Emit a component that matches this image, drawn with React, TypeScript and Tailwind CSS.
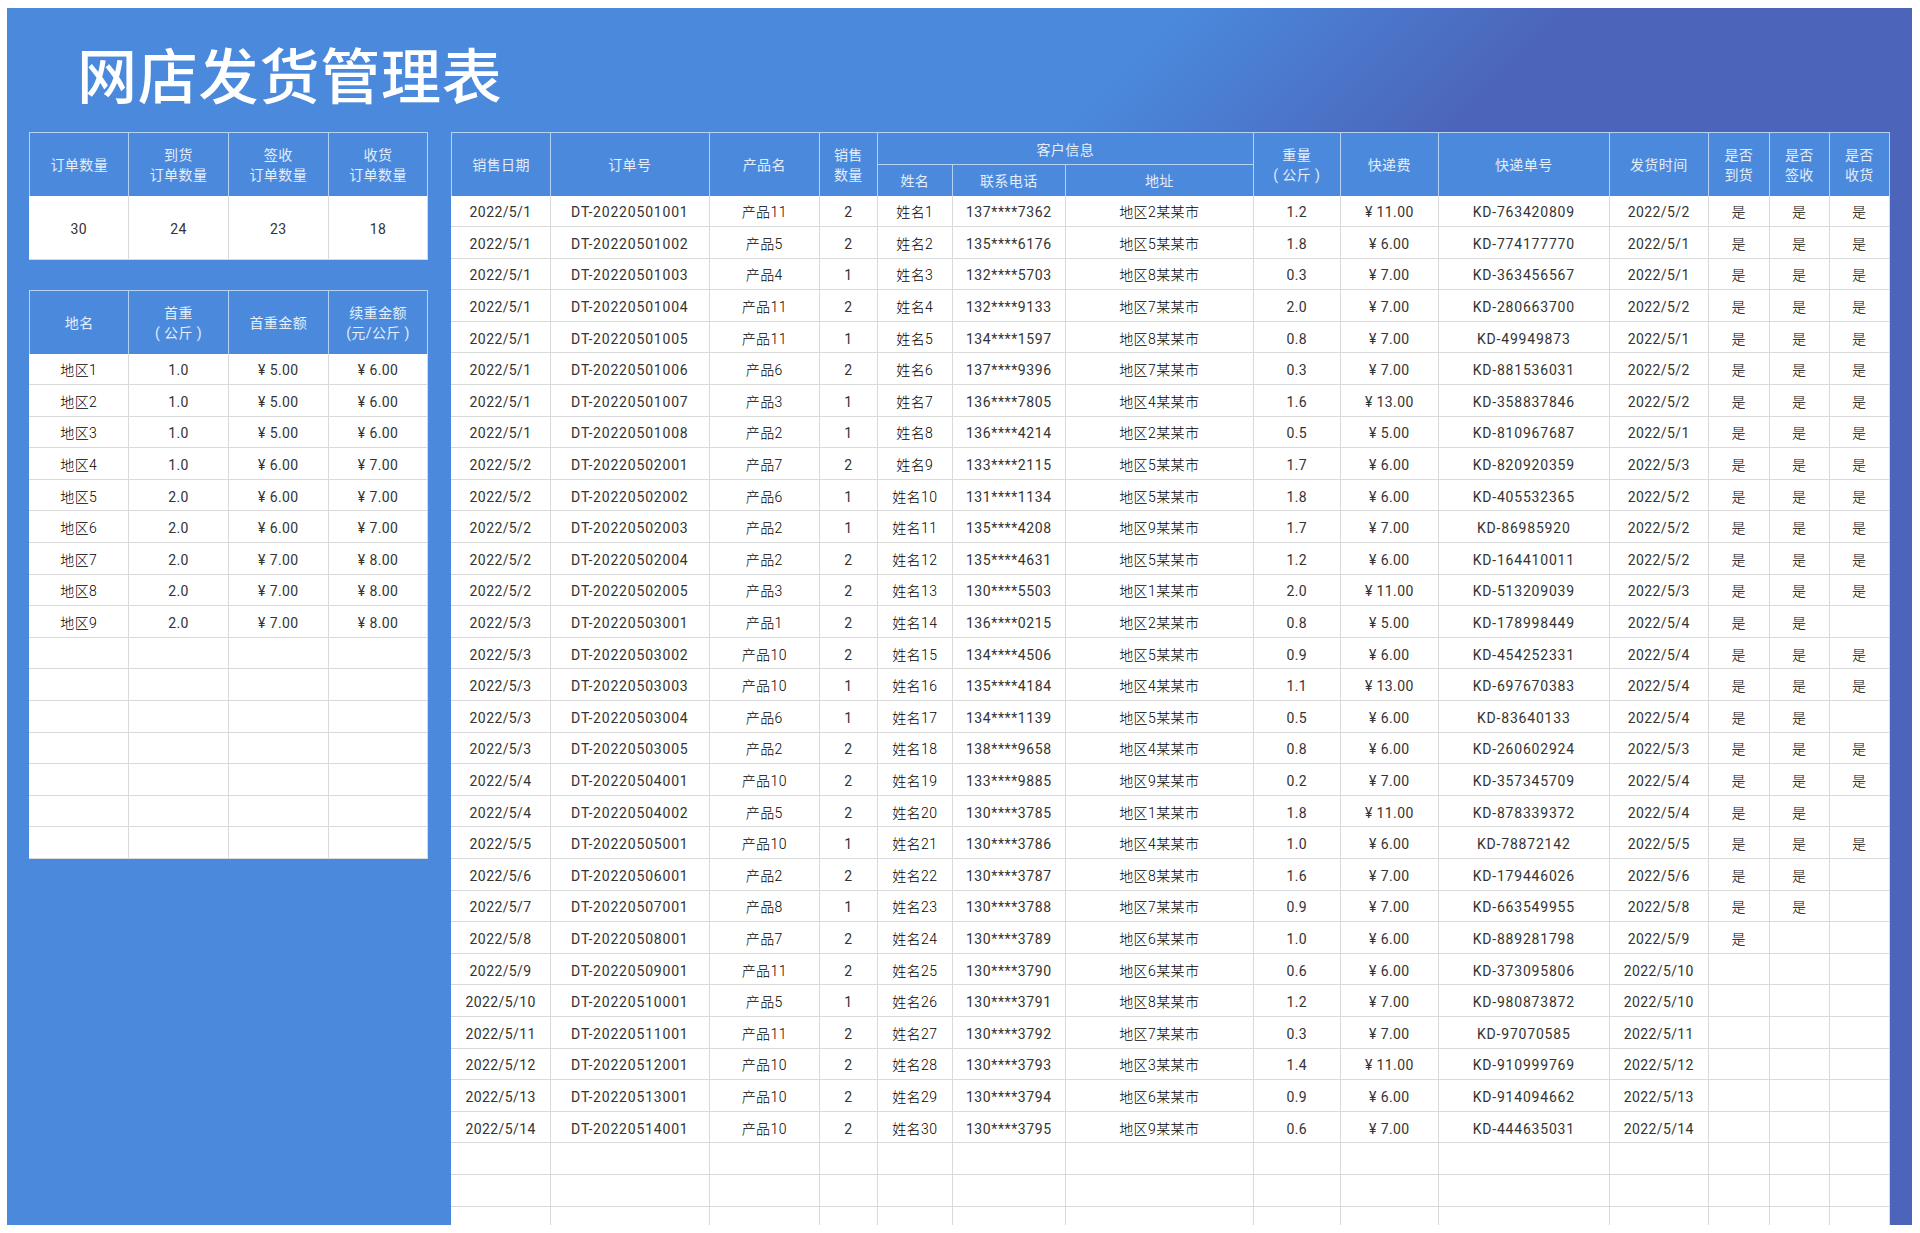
const raw = `2022/5/1|DT-20220501001|产品11|2|姓名1|137****7362|地区2某某市|1.2|11.00|KD-763420809|2022/5/2|是|是|是
2022/5/1|DT-20220501002|产品5|2|姓名2|135****6176|地区5某某市|1.8|6.00|KD-774177770|2022/5/1|是|是|是
2022/5/1|DT-20220501003|产品4|1|姓名3|132****5703|地区8某某市|0.3|7.00|KD-363456567|2022/5/1|是|是|是
2022/5/1|DT-20220501004|产品11|2|姓名4|132****9133|地区7某某市|2.0|7.00|KD-280663700|2022/5/2|是|是|是
2022/5/1|DT-20220501005|产品11|1|姓名5|134****1597|地区8某某市|0.8|7.00|KD-49949873|2022/5/1|是|是|是
2022/5/1|DT-20220501006|产品6|2|姓名6|137****9396|地区7某某市|0.3|7.00|KD-881536031|2022/5/2|是|是|是
2022/5/1|DT-20220501007|产品3|1|姓名7|136****7805|地区4某某市|1.6|13.00|KD-358837846|2022/5/2|是|是|是
2022/5/1|DT-20220501008|产品2|1|姓名8|136****4214|地区2某某市|0.5|5.00|KD-810967687|2022/5/1|是|是|是
2022/5/2|DT-20220502001|产品7|2|姓名9|133****2115|地区5某某市|1.7|6.00|KD-820920359|2022/5/3|是|是|是
2022/5/2|DT-20220502002|产品6|1|姓名10|131****1134|地区5某某市|1.8|6.00|KD-405532365|2022/5/2|是|是|是
2022/5/2|DT-20220502003|产品2|1|姓名11|135****4208|地区9某某市|1.7|7.00|KD-86985920|2022/5/2|是|是|是
2022/5/2|DT-20220502004|产品2|2|姓名12|135****4631|地区5某某市|1.2|6.00|KD-164410011|2022/5/2|是|是|是
2022/5/2|DT-20220502005|产品3|2|姓名13|130****5503|地区1某某市|2.0|11.00|KD-513209039|2022/5/3|是|是|是
2022/5/3|DT-20220503001|产品1|2|姓名14|136****0215|地区2某某市|0.8|5.00|KD-178998449|2022/5/4|是|是|
2022/5/3|DT-20220503002|产品10|2|姓名15|134****4506|地区5某某市|0.9|6.00|KD-454252331|2022/5/4|是|是|是
2022/5/3|DT-20220503003|产品10|1|姓名16|135****4184|地区4某某市|1.1|13.00|KD-697670383|2022/5/4|是|是|是
2022/5/3|DT-20220503004|产品6|1|姓名17|134****1139|地区5某某市|0.5|6.00|KD-83640133|2022/5/4|是|是|
2022/5/3|DT-20220503005|产品2|2|姓名18|138****9658|地区4某某市|0.8|6.00|KD-260602924|2022/5/3|是|是|是
2022/5/4|DT-20220504001|产品10|2|姓名19|133****9885|地区9某某市|0.2|7.00|KD-357345709|2022/5/4|是|是|是
2022/5/4|DT-20220504002|产品5|2|姓名20|130****3785|地区1某某市|1.8|11.00|KD-878339372|2022/5/4|是|是|
2022/5/5|DT-20220505001|产品10|1|姓名21|130****3786|地区4某某市|1.0|6.00|KD-78872142|2022/5/5|是|是|是
2022/5/6|DT-20220506001|产品2|2|姓名22|130****3787|地区8某某市|1.6|7.00|KD-179446026|2022/5/6|是|是|
2022/5/7|DT-20220507001|产品8|1|姓名23|130****3788|地区7某某市|0.9|7.00|KD-663549955|2022/5/8|是|是|
2022/5/8|DT-20220508001|产品7|2|姓名24|130****3789|地区6某某市|1.0|6.00|KD-889281798|2022/5/9|是||
2022/5/9|DT-20220509001|产品11|2|姓名25|130****3790|地区6某某市|0.6|6.00|KD-373095806|2022/5/10|||
2022/5/10|DT-20220510001|产品5|1|姓名26|130****3791|地区8某某市|1.2|7.00|KD-980873872|2022/5/10|||
2022/5/11|DT-20220511001|产品11|2|姓名27|130****3792|地区7某某市|0.3|7.00|KD-97070585|2022/5/11|||
2022/5/12|DT-20220512001|产品10|2|姓名28|130****3793|地区3某某市|1.4|11.00|KD-910999769|2022/5/12|||
2022/5/13|DT-20220513001|产品10|2|姓名29|130****3794|地区6某某市|0.9|6.00|KD-914094662|2022/5/13|||
2022/5/14|DT-20220514001|产品10|2|姓名30|130****3795|地区9某某市|0.6|7.00|KD-444635031|2022/5/14|||`;

const rows = raw.split("\n").map((l) => l.split("|").map((c, i) => (i === 8 ? "¥ " + c : c)));
for (let i = 0; i < 3; i++) rows.push(Array(14).fill(""));

const regions: string[][] = [
  ["地区1", "1.0", "¥ 5.00", "¥ 6.00"],
  ["地区2", "1.0", "¥ 5.00", "¥ 6.00"],
  ["地区3", "1.0", "¥ 5.00", "¥ 6.00"],
  ["地区4", "1.0", "¥ 6.00", "¥ 7.00"],
  ["地区5", "2.0", "¥ 6.00", "¥ 7.00"],
  ["地区6", "2.0", "¥ 6.00", "¥ 7.00"],
  ["地区7", "2.0", "¥ 7.00", "¥ 8.00"],
  ["地区8", "2.0", "¥ 7.00", "¥ 8.00"],
  ["地区9", "2.0", "¥ 7.00", "¥ 8.00"],
];
for (let i = 0; i < 7; i++) regions.push(["", "", "", ""]);

const H = "flex items-center justify-center text-center pt-[2px] leading-[20px] font-normal text-white/85 bg-[#4a89dc] border-t border-r border-[#b5d2f4]";
const D = "flex items-center justify-center pt-[4px] border-r border-b border-[#dadada] bg-white";
const NUM = "font-normal text-[#333]";
const CJK = "font-light text-black";

const colStyle = [
  NUM + " tracking-[0.4px]",
  NUM + " tracking-[0.8px]",
  CJK + " tracking-[0.4px]",
  NUM + " tracking-[0.4px]",
  CJK + " tracking-[0.4px]",
  NUM + " tracking-[0.6px]",
  CJK + " tracking-[0.4px]",
  NUM + " tracking-[0.4px]",
  NUM + " tracking-[0.4px]",
  NUM + " tracking-[0.8px]",
  NUM + " tracking-[0.4px]",
  CJK,
  CJK,
  CJK,
];

function Head({ className = "", children }: { className?: string; children: React.ReactNode }) {
  return <div className={H + " " + className}>{children}</div>;
}

function SmallHeadLines({ a, b }: { a: string; b: string }) {
  return (
    <span>
      {a}
      <br />
      {b}
    </span>
  );
}

export default function App() {
  return (
    <div className="w-[1920px] h-[1233px] bg-white pt-2 pl-[7px] overflow-hidden font-['Roboto','Noto_Sans_CJK_SC',sans-serif] text-[14px] tracking-[0.4px]">
      <div className="w-[1905px] h-[1217px] overflow-hidden flex flex-col bg-[linear-gradient(135deg,#4a89dc_37.8%,#4c64b9_50.5%)]">
        <div className="h-[124px] shrink-0 pl-[70px] pt-[34px]">
          <h1 className="text-[60px] leading-[62px] tracking-[0.8px] font-medium text-white font-['Noto_Sans_CJK_SC',sans-serif]">
            网店发货管理表
          </h1>
        </div>
        <div className="flex flex-1 min-h-0">
          <div className="w-[444.4px] shrink-0 bg-[#4a89dc] pl-[22.4px]">
            <div className="w-[399px] grid grid-cols-4 grid-rows-[63.5px_64px]">
              <Head className="border-l">订单数量</Head>
              <Head><SmallHeadLines a="到货" b="订单数量" /></Head>
              <Head><SmallHeadLines a="签收" b="订单数量" /></Head>
              <Head><SmallHeadLines a="收货" b="订单数量" /></Head>
              {["30", "24", "23", "18"].map((v) => (
                <div key={v} className={D + " " + NUM}>{v}</div>
              ))}
            </div>
            <div className="w-[399px] mt-[30.5px] grid grid-cols-4 grid-rows-[63.5px] auto-rows-[31.6px]">
              <Head className="border-l">地名</Head>
              <Head><SmallHeadLines a="首重" b="( 公斤 )" /></Head>
              <Head>首重金额</Head>
              <Head><SmallHeadLines a="续重金额" b="(元/公斤 )" /></Head>
              {regions.flatMap((r, i) =>
                r.map((c, j) => (
                  <div key={i + "-" + j} className={D + " " + (j === 0 ? CJK : NUM)}>{c}</div>
                ))
              )}
            </div>
          </div>
          <div className="w-[1438.4px] shrink-0 grid grid-cols-[99.4px_159px_110px_58px_75px_113px_188px_87px_98px_171px_99px_61px_60px_60px] grid-rows-[32px_31.5px] auto-rows-[31.6px]">
            <Head className="row-span-2 border-l">销售日期</Head>
            <Head className="row-span-2">订单号</Head>
            <Head className="row-span-2">产品名</Head>
            <Head className="row-span-2"><SmallHeadLines a="销售" b="数量" /></Head>
            <Head className="col-span-3">客户信息</Head>
            <Head className="row-span-2"><SmallHeadLines a="重量" b="( 公斤 )" /></Head>
            <Head className="row-span-2">快递费</Head>
            <Head className="row-span-2">快递单号</Head>
            <Head className="row-span-2">发货时间</Head>
            <Head className="row-span-2"><SmallHeadLines a="是否" b="到货" /></Head>
            <Head className="row-span-2"><SmallHeadLines a="是否" b="签收" /></Head>
            <Head className="row-span-2"><SmallHeadLines a="是否" b="收货" /></Head>
            <Head>姓名</Head>
            <Head>联系电话</Head>
            <Head>地址</Head>
            {rows.flatMap((r, i) =>
              r.map((c, j) => (
                <div key={i + "-" + j} className={D + " " + colStyle[j]}>{c}</div>
              ))
            )}
          </div>
        </div>
      </div>
    </div>
  );
}
